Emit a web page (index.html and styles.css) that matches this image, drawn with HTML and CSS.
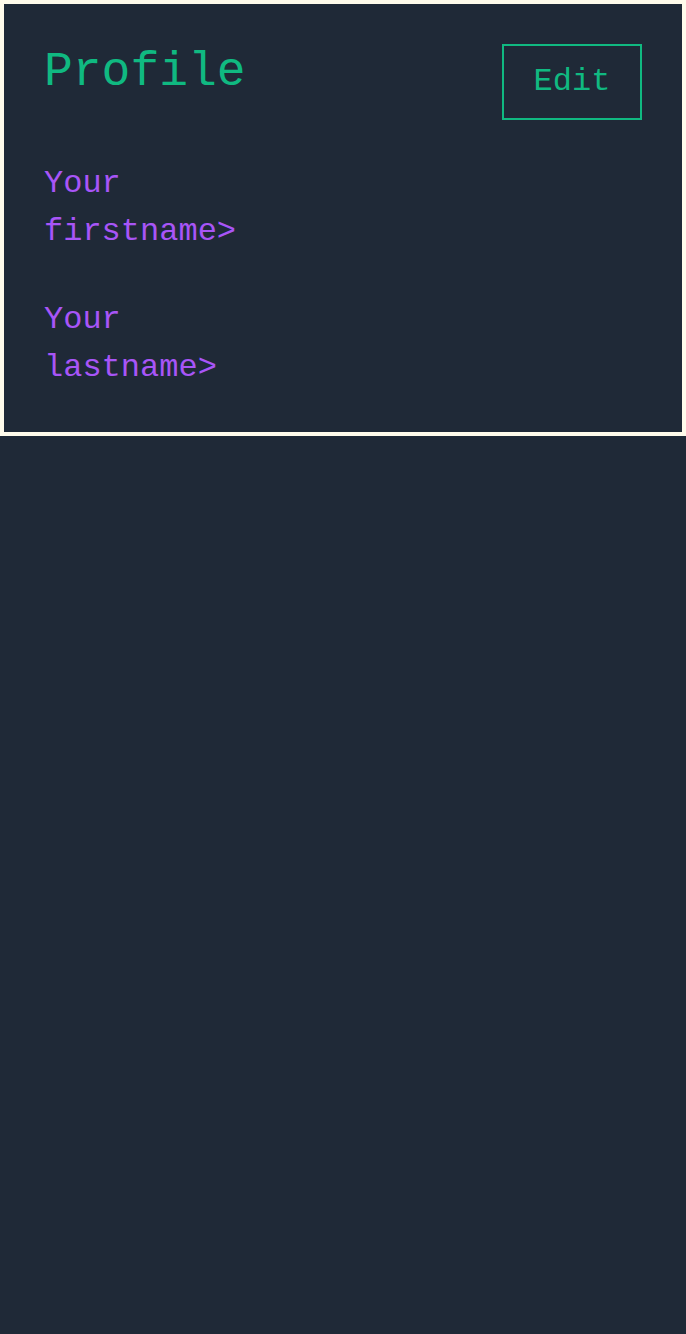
FILE: index.html
```html
<!DOCTYPE html>
<html lang="en">
<head>
<meta charset="utf-8">
<title>Profile</title>
<link rel="stylesheet" href="styles.css">
</head>
<body>
  <section class="card">
    <header class="card-header">
      <h1 class="title">Profile</h1>
      <button class="edit-btn" type="button">Edit</button>
    </header>
    <div class="fields">
      <p class="field">Your firstname&gt;</p>
      <p class="field">Your lastname&gt;</p>
    </div>
  </section>
</body>
</html>
```
FILE: styles.css
```css
html, body {
  margin: 0;
  padding: 0;
  background: #1f2937;
  min-height: 100%;
}

body {
  font-family: "Liberation Mono", "DejaVu Sans Mono", monospace;
}

.card {
  border: 4px solid #fffbeb;
  padding: 40px;
  display: flex;
  flex-direction: column;
  gap: 40px;
}

.card-header {
  display: flex;
  justify-content: space-between;
  align-items: flex-start;
}

.title {
  margin: 0;
  font-size: 48px;
  line-height: 57.6px;
  font-weight: 400;
  color: #10b981;
}

.edit-btn {
  box-sizing: border-box;
  width: 140px;
  height: 76px;
  padding: 12px 0;
  background: transparent;
  border: 2px solid #10b981;
  border-radius: 0;
  color: #10b981;
  font-family: "Liberation Mono", "DejaVu Sans Mono", monospace;
  font-size: 32px;
  line-height: 48px;
  text-align: center;
}

.fields {
  display: flex;
  flex-direction: column;
  gap: 40px;
}

.field {
  margin: 0;
  max-width: 240px;
  font-size: 32px;
  line-height: 48px;
  color: #a855f7;
}
```
